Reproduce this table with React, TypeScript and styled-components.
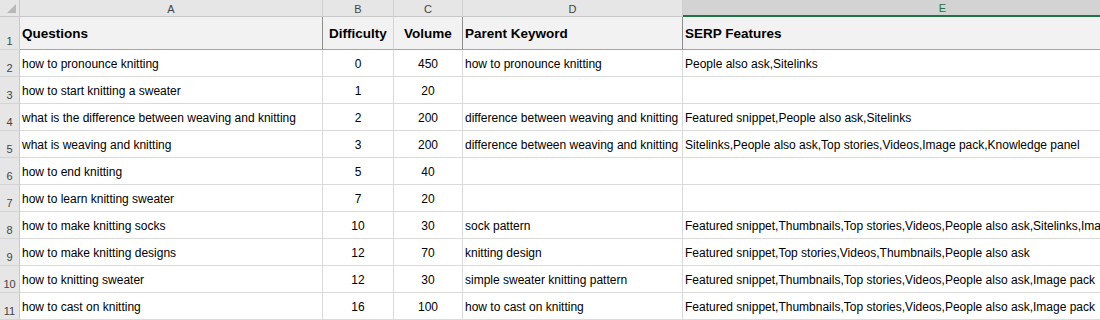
import styled, { createGlobalStyle, css } from 'styled-components';
import type { FC } from 'react';

const GlobalStyle = createGlobalStyle`
  html, body {
    margin: 0;
    padding: 0;
    background: #ffffff;
    overflow: hidden;
  }
`;

const COLS = [
  { letter: 'A', width: 303, align: 'left' },
  { letter: 'B', width: 71, align: 'center' },
  { letter: 'C', width: 69, align: 'center' },
  { letter: 'D', width: 220, align: 'left' },
  { letter: 'E', width: 520, align: 'left' },
] as const;

const HEADINGS = ['Questions', 'Difficulty', 'Volume', 'Parent Keyword', 'SERP Features'];

// columns where the title row gets a dark right divider
const DARK_DIVIDER = [true, false, true, true];

const ROWS: string[][] = [
  ['how to pronounce knitting', '0', '450', 'how to pronounce knitting', 'People also ask,Sitelinks'],
  ['how to start knitting a sweater', '1', '20', '', ''],
  [
    'what is the difference between weaving and knitting',
    '2',
    '200',
    'difference between weaving and knitting',
    'Featured snippet,People also ask,Sitelinks',
  ],
  [
    'what is weaving and knitting',
    '3',
    '200',
    'difference between weaving and knitting',
    'Sitelinks,People also ask,Top stories,Videos,Image pack,Knowledge panel',
  ],
  ['how to end knitting', '5', '40', '', ''],
  ['how to learn knitting sweater', '7', '20', '', ''],
  [
    'how to make knitting socks',
    '10',
    '30',
    'sock pattern',
    'Featured snippet,Thumbnails,Top stories,Videos,People also ask,Sitelinks,Image pack',
  ],
  [
    'how to make knitting designs',
    '12',
    '70',
    'knitting design',
    'Featured snippet,Top stories,Videos,Thumbnails,People also ask',
  ],
  [
    'how to knitting sweater',
    '12',
    '30',
    'simple sweater knitting pattern',
    'Featured snippet,Thumbnails,Top stories,Videos,People also ask,Image pack',
  ],
  [
    'how to cast on knitting',
    '16',
    '100',
    'how to cast on knitting',
    'Featured snippet,Thumbnails,Top stories,Videos,People also ask,Image pack',
  ],
];

const Viewport = styled.div`
  width: 1100px;
  height: 320px;
  overflow: hidden;
  font-family: 'Liberation Sans', Arial, sans-serif;
  color: #000;
`;

const Sheet = styled.div`
  display: grid;
  grid-template-columns: 20px ${COLS.map((c) => `${c.width}px`).join(' ')};
  grid-template-rows: 17px 33px repeat(${ROWS.length}, 27px);
`;

const Corner = styled.div`
  position: relative;
  background: #e6e6e6;
  border-right: 1px solid #c8c8c8;
  border-bottom: 1px solid #c8c8c8;
  box-sizing: border-box;
  &::after {
    content: '';
    position: absolute;
    right: 3px;
    bottom: 3px;
    width: 0;
    height: 0;
    border-left: 9px solid transparent;
    border-bottom: 9px solid #b8b8b8;
  }
`;

const ColLetter = styled.div<{ $active?: boolean }>`
  display: flex;
  align-items: center;
  justify-content: center;
  box-sizing: border-box;
  background: #e6e6e6;
  border-right: 1px solid #cfcfcf;
  border-bottom: 1px solid #c8c8c8;
  font-size: 11px;
  color: #444;
  padding-top: 1px;
  ${(p) =>
    p.$active &&
    css`
      background: #d3d3d3;
      color: #217346;
      border-bottom: 2px solid #217346;
    `}
`;

const RowNum = styled.div`
  display: flex;
  align-items: flex-end;
  justify-content: center;
  box-sizing: border-box;
  background: #e6e6e6;
  border-right: 1px solid #c8c8c8;
  border-bottom: 1px solid #d4d4d4;
  font-size: 11px;
  color: #444;
  padding-bottom: 2px;
`;

const TitleCell = styled.div<{ $dark?: boolean; $center?: boolean }>`
  display: flex;
  align-items: center;
  justify-content: ${(p) => (p.$center ? 'center' : 'flex-start')};
  box-sizing: border-box;
  padding: 1px 2px 0;
  background: #f2f2f2;
  border-right: 1px solid ${(p) => (p.$dark ? '#8e8e8e' : '#d4d4d4')};
  border-bottom: 1px solid #a3a3a3;
  font-size: 13.5px;
  font-weight: 700;
  white-space: nowrap;
`;

const Cell = styled.div<{ $center?: boolean }>`
  display: flex;
  align-items: center;
  justify-content: ${(p) => (p.$center ? 'center' : 'flex-start')};
  box-sizing: border-box;
  padding: 1px 2px 0;
  border-right: 1px solid #dadada;
  border-bottom: 1px solid #dadada;
  font-size: 12px;
  white-space: nowrap;
`;

const App: FC = () => (
  <Viewport>
    <GlobalStyle />
    <Sheet>
      <Corner />
      {COLS.map((c) => (
        <ColLetter key={c.letter} $active={c.letter === 'E'}>
          {c.letter}
        </ColLetter>
      ))}

      <RowNum>1</RowNum>
      {HEADINGS.map((h, i) => (
        <TitleCell key={h} $dark={DARK_DIVIDER[i] ?? true} $center={COLS[i].align === 'center'}>
          {h}
        </TitleCell>
      ))}

      {ROWS.map((row, r) => [
        <RowNum key={`n${r}`}>{r + 2}</RowNum>,
        ...row.map((value, i) => (
          <Cell key={`${r}-${i}`} $center={COLS[i].align === 'center'}>
            {value}
          </Cell>
        )),
      ])}
    </Sheet>
  </Viewport>
);

export default App;
